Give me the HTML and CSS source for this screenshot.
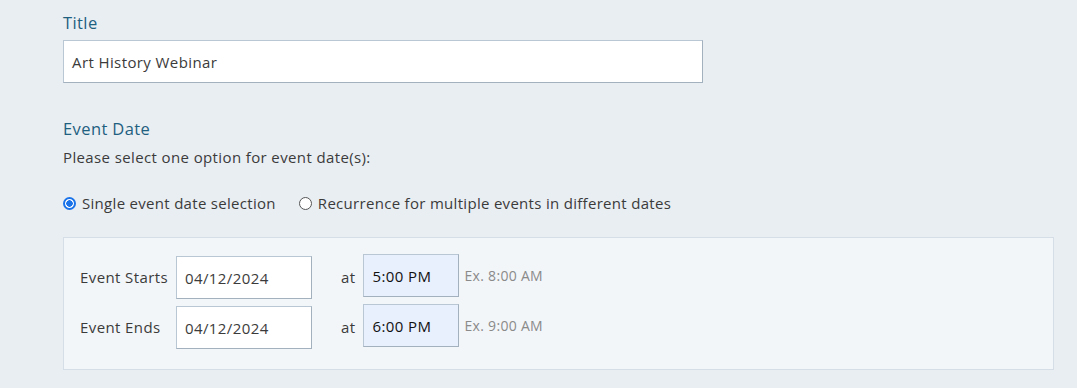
FILE: index.html
```html
<!DOCTYPE html>
<html lang="en">
<head>
<meta charset="utf-8">
<title>Event</title>
<link rel="stylesheet" href="styles.css">
</head>
<body>
<div class="page">
  <div class="field">
    <div class="label">Title</div>
    <div class="input title-input">Art History Webinar</div>
  </div>
  <div class="section">
    <div class="label">Event Date</div>
    <div class="hint">Please select one option for event date(s):</div>
    <div class="radios">
      <span class="radio-opt"><span class="radio checked"></span>Single event date selection</span>
      <span class="radio-opt"><span class="radio"></span>Recurrence for multiple events in different dates</span>
    </div>
    <div class="panel">
      <div class="row">
        <span class="row-label">Event Starts</span>
        <span class="input date">04/12/2024</span>
        <span class="at">at</span>
        <span class="input time">5:00 PM</span>
        <span class="ex">Ex. 8:00 AM</span>
      </div>
      <div class="row">
        <span class="row-label">Event Ends</span>
        <span class="input date">04/12/2024</span>
        <span class="at">at</span>
        <span class="input time">6:00 PM</span>
        <span class="ex">Ex. 9:00 AM</span>
      </div>
    </div>
  </div>
</div>
</body>
</html>
```
FILE: styles.css
```css
html, body { margin: 0; padding: 0; }
body {
  background: #e9eef3;
  font-family: "Open Sans", "Noto Sans", sans-serif;
  color: #3b3b3b;
  width: 1077px;
  height: 388px;
  overflow: hidden;
}
.page { padding: 12px 23px 0 63px; }
.label { color: #1f5f80; font-size: 16.5px; line-height: 22px; letter-spacing: 0.4px; }
.input {
  background: #fff;
  border: 1px solid #b9c6d3;
  border-right-color: #a3b1bf;
  border-bottom-color: #a3b1bf;
  box-sizing: border-box;
  font-size: 15px;
  letter-spacing: 0.4px;
  color: #3b3b3b;
  display: flex;
  align-items: center;
}
.title-input { width: 640px; height: 43px; margin-top: 6px; padding: 0 8px; }
.section { margin-top: 35px; }
.hint { font-size: 15px; letter-spacing: 0.38px; margin-top: 7px; line-height: 20px; }
.radios { display: flex; gap: 23px; margin-top: 26px; font-size: 15px; letter-spacing: 0.3px; line-height: 20px; }
.radio-opt { display: flex; align-items: center; }
.radio {
  width: 13px; height: 13px; border-radius: 50%;
  border: 1px solid #555; box-sizing: border-box; margin-right: 6px; background: #fff;
}
.radio.checked { border: 2px solid #1a73e8; background: radial-gradient(circle, #1a73e8 0 3px, #fff 3.5px); }
.panel {
  margin-top: 24px;
  width: 991px; box-sizing: border-box;
  background: #f3f6f9;
  border: 1px solid #d5dde6;
  padding: 18px 16px 20px;
  display: flex; flex-direction: column; gap: 7px;
}
.row { display: flex; align-items: center; }
.row-label { width: 96px; font-size: 15px; letter-spacing: 0.4px; margin-top: -2px; }
.date { width: 136px; height: 43px; padding: 0 8px; }
.at { margin-left: 29px; margin-right: 8px; font-size: 15px; letter-spacing: 0.4px; margin-top: -2px; }
.time { width: 96px; height: 43px; padding: 0 8px; background: #e8f0fe; color: #111; margin-top: -4px; }
.ex { margin-left: 5px; font-size: 14px; letter-spacing: 0.3px; color: #8a8a8a; margin-top: -4px; }
```
